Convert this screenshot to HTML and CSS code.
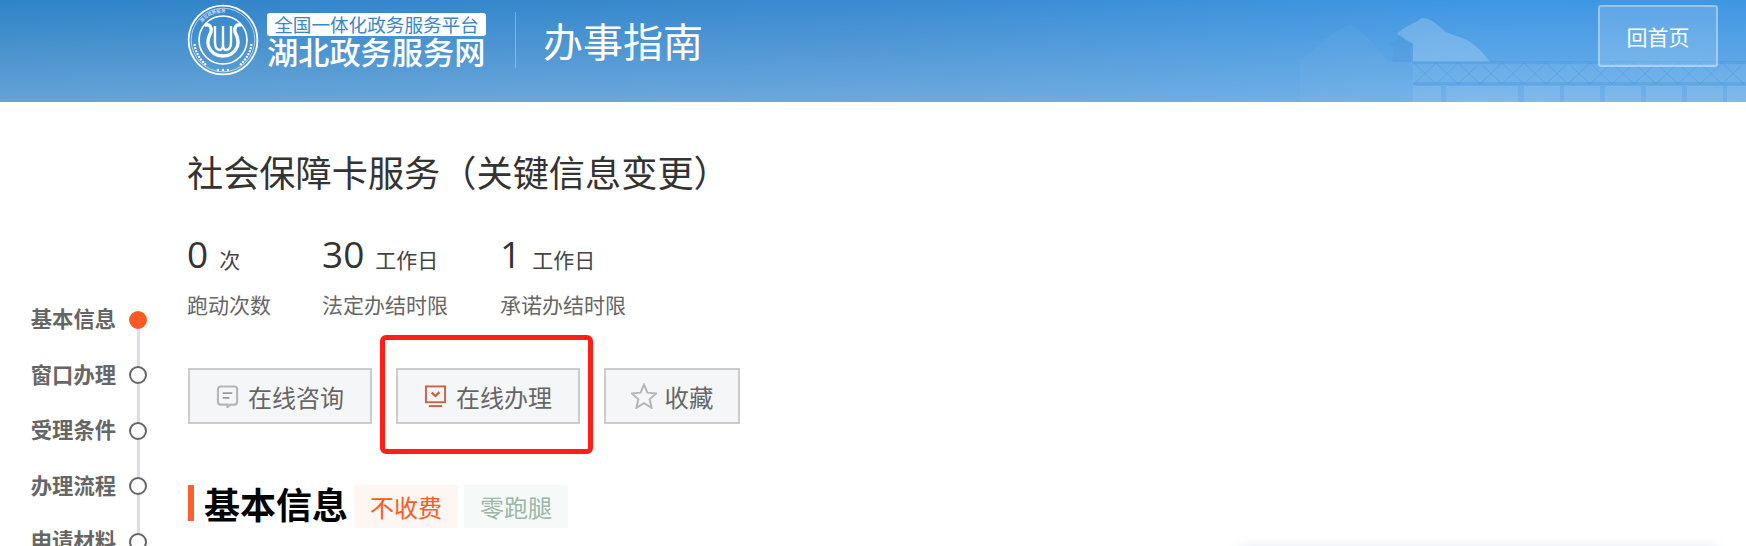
FILE: index.html
```html
<!DOCTYPE html>
<html lang="zh-CN">
<head>
    <meta charset="UTF-8">
    <meta name="viewport" content="width=device-width, initial-scale=1.0">
    <title>办事指南</title>
    <link rel="stylesheet" href="styles.css">
</head>
<body>

<header class="top">
    <svg class="scenery" viewBox="0 0 446 102" aria-hidden="true">
        <path d="M0 102 L0 60 C16 50 30 32 50 24 C62 30 76 46 88 62 L114 62 L114 102 Z" fill="#fff" opacity=".03"/>
        <path d="M97 34 C104 26 114 24 122 18 C132 18 138 26 146 32 L156 36 C166 38 174 44 182 52 L190 62 L113 62 L113 44 Z" fill="#fff" opacity=".2"/>
        <path d="M88 44 L98 40 L101 32 L104 40 L114 44 L110 48 L112 62 L92 62 L94 48 Z" fill="#3f86c6" opacity=".14"/>
        <rect x="113" y="62" width="333" height="22" fill="#fff" opacity=".07"/>
        <rect x="113" y="61" width="333" height="3" fill="#4795dc" opacity=".4"/>
        <rect x="113" y="82" width="333" height="3" fill="#4795dc" opacity=".35"/>
        <path d="M114 84 L136 63 L158 84 L180 63 L202 84 L224 63 L246 84 L268 63 L290 84 L312 63 L334 84 L356 63 L378 84 L400 63 L422 84 L444 63 M114 63 L136 84 L158 63 L180 84 L202 63 L224 84 L246 63 L268 84 L290 63 L312 84 L334 63 L356 84 L378 63 L400 84 L422 63 L444 84" fill="none" stroke="#4795dc" stroke-width="1" opacity=".45"/>
        <g fill="#fff" opacity=".1">
            <rect x="113" y="86" width="28" height="16"/>
            <rect x="146" y="86" width="72" height="16"/>
            <rect x="224" y="86" width="36" height="16"/>
            <rect x="264" y="86" width="36" height="16"/>
            <rect x="305" y="86" width="36" height="16"/>
            <rect x="346" y="86" width="36" height="16"/>
            <rect x="387" y="86" width="36" height="16"/>
            <rect x="427" y="86" width="19" height="16"/>
        </g>
    </svg>

    <svg class="logo" viewBox="0 0 72 72" aria-hidden="true">
        <circle cx="36" cy="36" r="34.4" fill="none" stroke="#fff" stroke-width="1.8"/>
        <circle cx="36" cy="36" r="31.8" fill="none" stroke="#fff" stroke-width=".6"/>
        <circle cx="36" cy="36" r="24" fill="none" stroke="#fff" stroke-width="1.6"/>
        <defs><path id="logoArc" d="M8.5 36 A27.5 27.5 0 0 1 63.5 36"/></defs>
        <text class="logo-text"><textPath href="#logoArc" startOffset="22%">湖北政务服务</textPath></text>
        <path d="M7.5 40 Q9 52 19 61 M64.5 40 Q63 52 53 61" fill="none" stroke="#fff" stroke-width="2.2" stroke-dasharray="2 1.2"/>
        <circle cx="31" cy="66" r="1.2" fill="#fff"/>
        <circle cx="36" cy="66" r="1.2" fill="#fff"/>
        <circle cx="41" cy="66" r="1.2" fill="#fff"/>
        <path d="M19 21 C23 20 25 24 24 28 C21 34 20 38 21.5 42 C24 49 30 52 36 52 C42 52 48 49 50.5 42 C52 38 51 34 48 28 C47 24 49 20 53 21" fill="none" stroke="#fff" stroke-width="3.4" stroke-linecap="round"/>
        <path d="M28 22 L28 38 Q28 46 33 46 Q36 46 36 40 L36 22 M36 40 Q36 46 39 46 Q44 46 44 38 L44 22" fill="none" stroke="#fff" stroke-width="2.4"/>
    </svg>

    <div class="brand">
        <span class="brand-tag">全国一体化政务服务平台</span>
        <span class="brand-name">湖北政务服务网</span>
    </div>
    <div class="top-title">办事指南</div>
    <a class="home-btn" href="#">回首页</a>
</header>

<div class="page">
    <nav class="steps">
        <a class="step active" href="#"><span>基本信息</span><i></i></a>
        <a class="step" href="#"><span>窗口办理</span><i></i></a>
        <a class="step" href="#"><span>受理条件</span><i></i></a>
        <a class="step" href="#"><span>办理流程</span><i></i></a>
        <a class="step" href="#"><span>申请材料</span><i></i></a>
    </nav>

    <main class="content">
        <h1 class="item-name">社会保障卡服务（关键信息变更）</h1>

        <div class="stats">
            <div class="stat">
                <div class="stat-value"><b>0</b>次</div>
                <div class="stat-label">跑动次数</div>
            </div>
            <div class="stat">
                <div class="stat-value"><b>30</b>工作日</div>
                <div class="stat-label">法定办结时限</div>
            </div>
            <div class="stat">
                <div class="stat-value"><b>1</b>工作日</div>
                <div class="stat-label">承诺办结时限</div>
            </div>
        </div>

        <div class="actions">
            <a class="action" href="#">
                <svg viewBox="0 0 24 24" fill="none" stroke="#b4b6ba" stroke-width="2.2"><path d="M5 1.5h14a3 3 0 0 1 3 3v13a3 3 0 0 1-3 3h-4l-3 2.5v-2.5H5a3 3 0 0 1-3-3v-13a3 3 0 0 1 3-3z"/><path d="M7 8.5h10M7 13.5h7" stroke="#97999d" stroke-width="1.8"/></svg>
                在线咨询
            </a>
            <a class="action action-marked" href="#">
                <svg viewBox="0 0 24 24" fill="none" stroke="#c9623f" stroke-width="2"><rect x="2" y="1.5" width="20" height="16.5"/><path d="M8 8l4 3.5 4-4" stroke-width="2.4"/><path d="M5 22h14" stroke-width="2"/></svg>
                在线办理
                <span class="marker"></span>
            </a>
            <a class="action action-short" href="#">
                <svg viewBox="0 0 24 24" fill="none" stroke="#b4b6ba" stroke-width="1.8"><path d="M12 1.5l3.2 7.4 8 .8-6 5.3 1.8 7.9-7-4.2-7 4.2 1.8-7.9-6-5.3 8-.8z"/></svg>
                收藏
            </a>
        </div>

        <div class="section-head">
            <h2>基本信息</h2>
            <span class="tag tag-fee">不收费</span>
            <span class="tag tag-run">零跑腿</span>
        </div>
    </main>

    <aside class="side-card"></aside>
</div>

</body>
</html>
```

FILE: styles.css
```css
html, body {
    height: 546px;
    overflow: hidden;
}
body {
    margin: 0;
    font-family: "Noto Sans CJK SC", "Noto Sans", sans-serif;
    background-color: #fff;
    color: #333;
}
a {
    color: inherit;
    text-decoration: none;
}

/* header */
.top {
    position: relative;
    display: flex;
    align-items: flex-start;
    height: 102px;
    padding-left: 187px;
    padding-right: 28px;
    box-sizing: border-box;
    background:
        linear-gradient(180deg, rgba(255, 255, 255, 0) 0%, rgba(255, 255, 255, .26) 100%),
        linear-gradient(90deg, #2f83c7 0%, #3a8ad0 50%, #3f97e3 85%, #4096e2 100%);
}
.scenery {
    position: absolute;
    right: 0;
    top: 0;
    width: 446px;
    height: 102px;
}
.logo {
    width: 72px;
    height: 72px;
    margin-top: 4px;
    flex-shrink: 0;
}
.logo-text {
    font-size: 4.4px;
    fill: #fff;
}
.brand {
    display: flex;
    flex-direction: column;
    width: 219px;
    margin-left: 8px;
    margin-top: 13px;
    color: #fff;
}
.brand-tag {
    height: 23px;
    line-height: 22px;
    background-color: #fff;
    border-radius: 3px;
    color: #3a87c9;
    font-size: 18.6px;
    text-align: center;
    white-space: nowrap;
}
.brand-name {
    margin-top: -3px;
    line-height: 36px;
    font-size: 31.2px;
    font-weight: 500;
    white-space: nowrap;
}
.top-title {
    margin-left: 29px;
    margin-top: 12px;
    height: 56px;
    padding-left: 27px;
    border-left: 1px solid rgba(255, 255, 255, .3);
    color: #fff;
    font-size: 40px;
    line-height: 56px;
    font-weight: 400;
}
.home-btn {
    position: relative;
    margin-left: auto;
    margin-top: 5px;
    width: 120px;
    height: 62px;
    box-sizing: border-box;
    border: 2px solid rgba(255, 255, 255, .35);
    border-radius: 3px;
    background-color: rgba(255, 255, 255, .15);
    color: #fff;
    font-size: 21px;
    line-height: 58px;
    text-align: center;
}

/* page body */
.page {
    display: flex;
    align-items: flex-start;
}
.steps {
    display: flex;
    flex-direction: column;
    flex-shrink: 0;
    width: 147px;
    margin-right: 40px;
    padding-top: 190px;
}
.step {
    position: relative;
    display: flex;
    align-items: center;
    justify-content: flex-end;
    height: 55.5px;
    color: #666;
    font-size: 21.3px;
    font-weight: 700;
    white-space: nowrap;
}
.step span {
    margin-bottom: 4px;
}
.step i {
    position: relative;
    z-index: 1;
    width: 18px;
    height: 18px;
    margin-left: 13px;
    box-sizing: border-box;
    border: 2px solid #666;
    border-radius: 50%;
    background-color: #fff;
}
.step.active i {
    border-color: #ff5a23;
    background-color: #ff5a23;
}
.step::after {
    content: "";
    position: absolute;
    right: 7.5px;
    top: 50%;
    width: 3px;
    height: 100%;
    background-color: #dcdde6;
}
.content {
    width: 600px;
    flex-shrink: 0;
}
.item-name {
    margin: 47px 0 0;
    font-size: 36.2px;
    line-height: 44px;
    font-weight: 400;
    color: #333;
    white-space: nowrap;
}
.stats {
    display: grid;
    grid-template-columns: 135px 178px 1fr;
    margin-top: 36px;
}
.stat-value {
    display: flex;
    align-items: baseline;
    height: 50px;
    color: #444;
    font-size: 21px;
    line-height: 50px;
}
.stat-value b {
    margin-right: 11px;
    font-family: "Open Sans", sans-serif;
    font-size: 37px;
    font-weight: 400;
    color: #333;
}
.stat-label {
    margin-top: 10px;
    color: #666;
    font-size: 21px;
    line-height: 30px;
}
.actions {
    display: flex;
    margin-top: 49px;
    margin-left: 1px;
}
.action {
    position: relative;
    display: flex;
    align-items: center;
    justify-content: center;
    width: 184px;
    height: 56px;
    box-sizing: border-box;
    margin-right: 24px;
    border: 2px solid #ccc;
    background-color: #f5f6f8;
    color: #666;
    font-size: 24px;
}
.action-short {
    width: 136px;
    margin-right: 0;
    font-size: 24.4px;
}
.action svg {
    width: 23px;
    height: 23px;
    margin-right: 9px;
}
.action-short svg {
    width: 26px;
    height: 26px;
    margin-right: 8px;
}
.marker {
    position: absolute;
    left: -18px;
    right: -15px;
    top: -35px;
    bottom: -32px;
    border: 5px solid #ff2015;
    border-radius: 6px;
    pointer-events: none;
}
.section-head {
    display: flex;
    align-items: flex-start;
    margin-top: 61px;
    margin-left: 1px;
}
.section-head h2 {
    margin: 0 6px 0 0;
    height: 36px;
    padding-left: 10px;
    border-left: 6px solid #ff5f2b;
    color: #000;
    font-size: 36px;
    line-height: 36px;
    font-weight: 700;
    white-space: nowrap;
}
.tag {
    width: 104px;
    height: 43px;
    margin-right: 6px;
    font-size: 24px;
    line-height: 43px;
    text-align: center;
}
.tag-fee {
    background-color: #fdf6f3;
    color: #ff5a23;
}
.tag-run {
    background-color: #f5f9f7;
    color: #9ab7aa;
}
.side-card {
    width: 476px;
    height: 300px;
    margin-left: 453px;
    margin-top: 444px;
    flex-shrink: 0;
    background-color: #fff;
    box-shadow: 0 0 10px rgba(130, 150, 210, .18);
}
```
